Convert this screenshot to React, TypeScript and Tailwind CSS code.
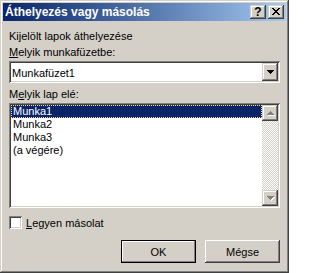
import React from "react";

const raised =
  "shadow-[inset_-1px_-1px_0_#404040,inset_1px_1px_0_#ffffff,inset_-2px_-2px_0_#808080,inset_2px_2px_0_#d4d0c8]";
const captionRaised =
  "shadow-[inset_-1px_-1px_0_#404040,inset_1px_1px_0_#d4d0c8,inset_-2px_-2px_0_#808080,inset_2px_2px_0_#ffffff]";
const sunken =
  "shadow-[inset_1px_1px_0_#808080,inset_-1px_-1px_0_#ffffff,inset_2px_2px_0_#404040,inset_-2px_-2px_0_#d4d0c8]";

function DownArrow() {
  return (
    <svg width="7" height="4" viewBox="0 0 7 4" shapeRendering="crispEdges">
      <path d="M0 0h7v1H0z M1 1h5v1H1z M2 2h3v1H2z M3 3h1v1H3z" fill="#000" />
    </svg>
  );
}

function DisabledArrow({ up }: { up: boolean }) {
  const gray = up
    ? "M3 0h1v1H3z M2 1h3v1H2z M1 2h5v1H1z M0 3h7v1H0z"
    : "M0 0h7v1H0z M1 1h5v1H1z M2 2h3v1H2z M3 3h1v1H3z";
  const white = up
    ? "M4 1h1v1H4z M3 2h3v1H3z M2 3h5v1H2z M1 4h7v1H1z"
    : "M1 1h7v1H1z M2 2h5v1H2z M3 3h3v1H3z M4 4h1v1H4z";
  return (
    <svg width="8" height="5" viewBox="0 0 8 5" shapeRendering="crispEdges">
      <path d={white} fill="#ffffff" />
      <path d={gray} fill="#808080" />
    </svg>
  );
}

function CloseGlyph() {
  return (
    <svg width="8" height="7" viewBox="0 0 8 7" shapeRendering="crispEdges">
      <path
        d="M0 0h2v1H0z M6 0h2v1H6z M1 1h2v1H1z M5 1h2v1H5z M2 2h4v1H2z M3 3h2v1H3z M2 4h4v1H2z M1 5h2v1H1z M5 5h2v1H5z M0 6h2v1H0z M6 6h2v1H6z"
        fill="#000"
      />
    </svg>
  );
}

export default function App() {
  return (
    <div
      className={`w-[289px] h-[273px] bg-[#d4d0c8] p-[3px] flex flex-col text-[11px] leading-[16px] text-black font-['Liberation_Sans',Arial,sans-serif] shadow-[inset_-1px_-1px_0_#404040,inset_1px_1px_0_#d4d0c8,inset_-2px_-2px_0_#808080,inset_2px_2px_0_#ffffff]`}
    >
      {/* Title bar */}
      <div className="h-[18px] flex items-center bg-linear-to-r from-[#0a246a] to-[#a6caf0] pl-[2px] pr-[2px]">
        <span className="flex-1 text-white font-bold text-[12px] leading-[16px]">Áthelyezés vagy másolás</span>
        <div
          className={`w-[16px] h-[14px] bg-[#d4d0c8] ${captionRaised} flex items-center justify-center font-bold text-[12px] leading-[14px] pb-[1px]`}
        >
          ?
        </div>
        <div className="w-[2px]" />
        <div
          className={`w-[16px] h-[14px] bg-[#d4d0c8] ${captionRaised} flex items-center justify-center pb-[1px]`}
        >
          <CloseGlyph />
        </div>
      </div>

      {/* Content */}
      <div className="flex flex-col px-[6px] pt-[7px]">
        <div className="h-[16px]">Kijelölt lapok áthelyezése</div>
        <div className="h-[16px]">
          <u>M</u>elyik munkafüzetbe:
        </div>

        {/* Combo */}
        <div className={`mt-[1px] h-[22px] bg-white ${sunken} p-[2px] flex`}>
          <div className="flex-1 pl-[1px] leading-[18px] pt-[1px]">Munkafüzet1</div>
          <div
            className={`w-[16px] h-[18px] bg-[#d4d0c8] ${captionRaised} flex items-center justify-center`}
          >
            <DownArrow />
          </div>
        </div>

        <div className="mt-[3px] h-[16px]">
          M<u>e</u>lyik lap elé:
        </div>

        {/* List */}
        <div className={`mt-[1px] h-[105px] bg-white ${sunken} p-[2px] flex`}>
          <div className="flex-1 flex flex-col leading-[11px]">
            <div className="h-[13px] bg-[#0a246a] text-white border border-dotted border-[#f5db95] pl-[1px]">
              Munka1
            </div>
            <div className="h-[13px] pl-[2px] pt-[1px]">Munka2</div>
            <div className="h-[13px] pl-[2px] pt-[1px]">Munka3</div>
            <div className="h-[13px] pl-[2px] pt-[1px]">(a végére)</div>
          </div>
          <div className="w-[16px] flex flex-col">
            <div
              className={`h-[16px] bg-[#d4d0c8] ${captionRaised} flex items-center justify-center pl-[1px] pt-[1px]`}
            >
              <DisabledArrow up={true} />
            </div>
            <div className="flex-1 bg-[image:conic-gradient(#ffffff_25%,#d4d0c8_0_50%,#ffffff_0_75%,#d4d0c8_0)] bg-[length:2px_2px]" />
            <div
              className={`h-[16px] bg-[#d4d0c8] ${captionRaised} flex items-center justify-center pl-[1px] pt-[1px]`}
            >
              <DisabledArrow up={false} />
            </div>
          </div>
        </div>

        {/* Checkbox */}
        <div className="mt-[8px] h-[13px] flex items-center">
          <div className={`w-[13px] h-[13px] bg-white ${sunken}`} />
          <span className="ml-[4px]">
            <u>L</u>egyen másolat
          </span>
        </div>

        {/* Buttons */}
        <div className="mt-[11px] flex justify-end gap-[9px]">
          <div className="w-[75px] h-[23px] border border-black bg-[#d4d0c8] shadow-[inset_-1px_-1px_0_#808080,inset_1px_1px_0_#ffffff] flex items-center justify-center">
            OK
          </div>
          <div
            className={`w-[75px] h-[23px] bg-[#d4d0c8] ${raised} flex items-center justify-center`}
          >
            Mégse
          </div>
        </div>
      </div>
    </div>
  );
}
